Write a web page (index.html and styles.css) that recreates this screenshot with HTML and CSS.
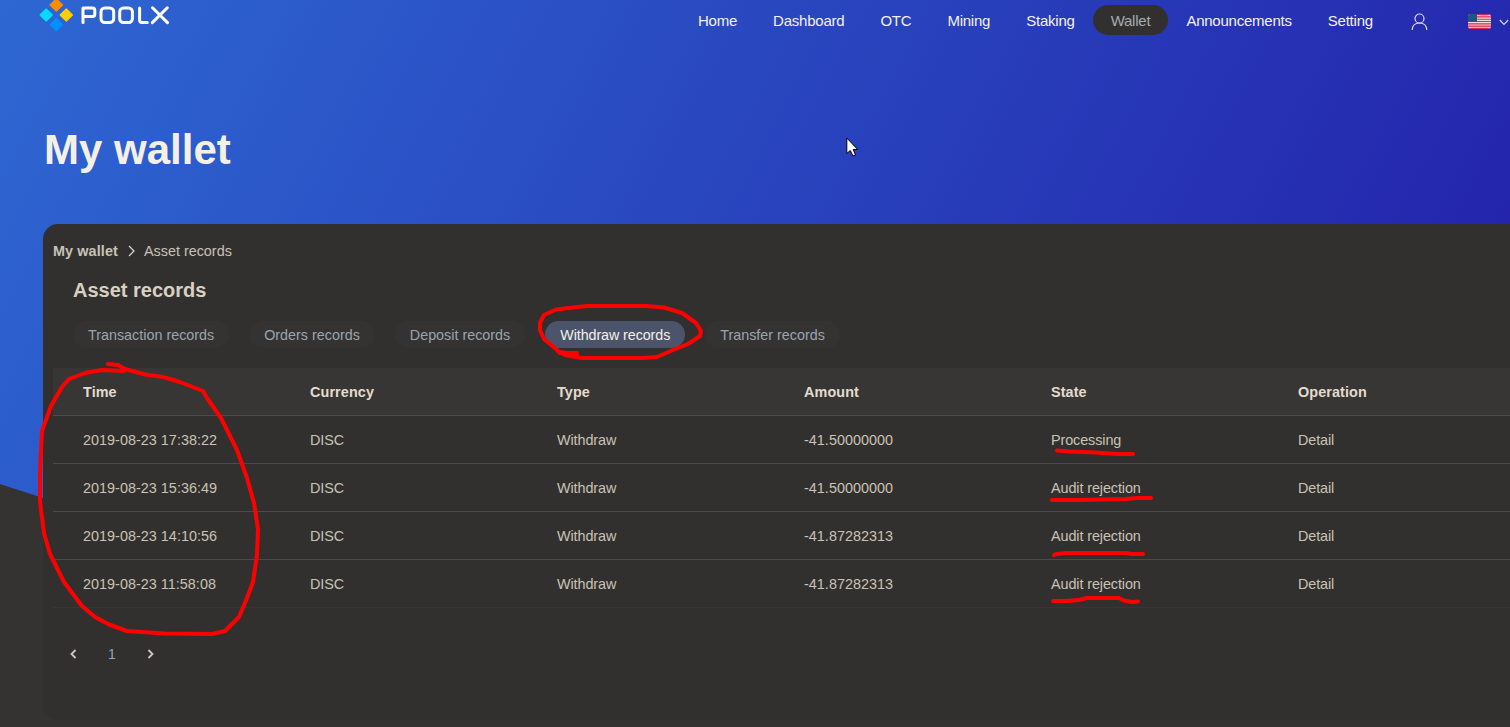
FILE: index.html
```html
<!DOCTYPE html>
<html lang="en">
  <head>
    <meta charset="UTF-8" />
    <meta name="viewport" content="width=device-width, initial-scale=1.0" />
    <title>POOLX - My wallet</title>
    <link rel="stylesheet" href="styles.css">
  </head>

  <body>
    <div class="page">
      <div class="page_bg"></div>
      <header class="header">
        <a class="logo">
          <svg width="132" height="34" viewBox="0 0 132 34">
            <g transform="translate(-39 0)">
              <rect x="-5" y="-5" width="10" height="10" rx="1" fill="#ff8c00" transform="translate(56.3 5) rotate(45)" />
              <rect x="-5" y="-5" width="10" height="10" rx="1" fill="#00dcff" transform="translate(46.2 15) rotate(45)" />
              <rect x="-5" y="-5" width="10" height="10" rx="1" fill="#ffcd00" transform="translate(66.3 15) rotate(45)" />
              <rect x="-5" y="-5" width="10" height="10" rx="1" fill="#0090ff" transform="translate(56.3 24.6) rotate(45)" />
              <!-- wordmark strokes -->
              <g class="logo_mark">
                <path d="M83 22.500V8h9.500q2.300 0 2.300 2.300v3.900q0 2.300-2.300 2.300H83" />
                <rect x="101" y="8" width="12.700" height="14.500" rx="3.800" />
                <rect x="119.700" y="8" width="12.700" height="14.500" rx="3.800" />
                <path d="M139.600 8v12q0 2.500 2.500 2.500h5.200" />
                <path d="M152.500 7.800l15 14.800M167.300 7.800l-15 14.800" />
              </g>
            </g>
          </svg>
        </a>
        <nav class="nav">
          <a class="nav_item">Home</a>
          <a class="nav_item">Dashboard</a>
          <a class="nav_item">OTC</a>
          <a class="nav_item">Mining</a>
          <a class="nav_item">Staking</a>
          <a class="nav_item active">Wallet</a>
          <a class="nav_item">Announcements</a>
          <a class="nav_item">Setting</a>
        </nav>
        <a class="user">
          <svg width="17" height="18" viewBox="0 0 17 18">
            <circle cx="8.500" cy="5.500" r="4.500" />
            <path d="M1.200 17c.2-4.600 3-7 7.300-7s7.100 2.400 7.300 7" />
          </svg>
        </a>
        <a class="lang">
          <svg class="flag" width="23" height="15" viewBox="0 0 23 15">
            <rect width="23" height="15" fill="#f3dfe5" />
            <path d="M0 .6h23M0 2.900h23M0 5.200h23M0 7.500h23M0 9.800h23M0 12.100h23M0 14.400h23" stroke="#d8274a" stroke-width="1.150" />
            <rect width="9" height="7.800" fill="#1d5788" />
          </svg>
          <svg class="arrow" width="10" height="7" viewBox="0 0 10 7">
            <path d="M.8 1L5 5.300 9.200 1" />
          </svg>
        </a>
      </header>

      <h1 class="title">My wallet</h1>

      <main class="panel">
        <div class="crumb">
          <b>My wallet</b>
          <svg width="7" height="12" viewBox="0 0 7 12"><path d="M1 1L6 6 1 11" /></svg>
          <span>Asset records</span>
        </div>
        <h2 class="sub_title">Asset records</h2>
        <div class="tabs">
          <a class="tab">Transaction records</a>
          <a class="tab">Orders records</a>
          <a class="tab">Deposit records</a>
          <a class="tab active">Withdraw records</a>
          <a class="tab">Transfer records</a>
        </div>
        <table class="records">
          <thead>
            <tr>
              <th class="time">Time</th>
              <th>Currency</th>
              <th>Type</th>
              <th>Amount</th>
              <th>State</th>
              <th>Operation</th>
            </tr>
          </thead>
          <tbody>
            <tr>
              <td class="num">2019-08-23 17:38:22</td>
              <td>DISC</td>
              <td>Withdraw</td>
              <td class="num">-41.50000000</td>
              <td>Processing</td>
              <td>Detail</td>
            </tr>
            <tr>
              <td class="num">2019-08-23 15:36:49</td>
              <td>DISC</td>
              <td>Withdraw</td>
              <td class="num">-41.50000000</td>
              <td>Audit rejection</td>
              <td>Detail</td>
            </tr>
            <tr>
              <td class="num">2019-08-23 14:10:56</td>
              <td>DISC</td>
              <td>Withdraw</td>
              <td class="num">-41.87282313</td>
              <td>Audit rejection</td>
              <td>Detail</td>
            </tr>
            <tr>
              <td class="num">2019-08-23 11:58:08</td>
              <td>DISC</td>
              <td>Withdraw</td>
              <td class="num">-41.87282313</td>
              <td>Audit rejection</td>
              <td>Detail</td>
            </tr>
          </tbody>
        </table>
        <div class="pager">
          <svg width="7" height="10" viewBox="0 0 7 10"><path d="M5.500 1L1.500 5l4 4" /></svg>
          <span>1</span>
          <svg width="7" height="10" viewBox="0 0 7 10"><path d="M1.500 1l4 4-4 4" /></svg>
        </div>
      </main>

      <!-- hand drawn marks -->
      <svg class="marks" width="1510" height="727" viewBox="0 0 1510 727">
        <path d="M108 364L118 365 125 369 145 374.500 163 377 180 382 203 391 207 398 221 418 237 450 247 478 254 503 258 529 257 555 253 582 247 598 239 617 225 631 212 634 165 633.500 127 631 109 624.500 95 617 82 606 64 582 50 554 44 533 40 502 40 472 42 431 51 406 62 387 69 379 85 373 102 370 124 371" />
        <path d="M577 353L560 353 556 349 544 339 540 330 540 323 544 315 556 309.500 587 306 646 306 664 307.500 682 313 696 323 701 331 700 336 688 344 673 350 657 357 643 358 582 358 565 355 559 352 577 354" />
        <path d="M1057 450.500L1070 451.500 1096 452.500 1117 454 1133 454" />
        <path d="M1052 500H1078L1125 499 1138 498H1151" />
        <path d="M1054 555L1057 554 1066 553H1126L1132 554H1143" />
        <path d="M1053 601H1066L1079 600 1087 598H1119L1124 600.500 1132 602 1138 601.500" />
      </svg>
      <svg class="cursor" width="13" height="20" viewBox="0 0 13 20">
        <path d="M.8 1v15.500l3.500-3 2.700 5.500 2.500-1-2.300-5.500h4.500z" />
      </svg>
    </div>
  </body>
</html>
```
FILE: styles.css
```css
body {
  margin: 0;
  font-family: "Liberation Sans", Arial, sans-serif;
  font-size: 14px;
  color: #c9c2b6;
  background-color: #343331;
}

.page {
  position: relative;
  height: 727px;
  overflow: hidden;
}

.page_bg {
  position: absolute;
  z-index: -1;
  left: 0;
  top: 0;
  width: 100%;
  height: 640px;
  background: linear-gradient(118deg, #2e67d2 0%, #2425ac 88%);
  clip-path: polygon(0 0, 100% 0, 100% 100%, 480px 100%, 0 484px);
}

.header {
  display: flex;
  height: 34px;
  padding-left: 39px;
}

.logo_mark {
  fill: none;
  stroke: #fff;
  stroke-width: 3;
  stroke-linecap: round;
  stroke-linejoin: round;
}

.nav {
  display: flex;
  margin-left: 509px;
  padding-top: 5px;
}

.nav_item {
  height: 30px;
  padding: 0 18px;
  line-height: 31px;
  font-size: 15px;
  letter-spacing: -0.23px;
  color: #f4f0ea;
  border-radius: 15px;
}

.nav_item.active {
  color: #a6abb0;
  background-color: #32302e;
}

.user {
  margin: 13px 0 0 20px;
}

.user svg,
.arrow,
.crumb svg {
  fill: none;
  stroke: #ded9dc;
  stroke-width: 1.2;
}

.lang {
  display: flex;
  align-items: flex-start;
  margin: 14px 0 0 40px;
}

.flag {
  border-radius: 3px;
}

.arrow {
  margin: 5px 0 0 8px;
}

.title {
  margin: 92px 0 0 44px;
  line-height: 48px;
  font-size: 42px;
  color: #f5f0e5;
}

/* runs past the right edge of the window */
.panel {
  box-sizing: border-box;
  height: 496px;
  margin: 50px -20px 0 43px;
  padding: 17px 0 0 10px;
  background-color: #32302e;
  border-radius: 15px;
}

.crumb {
  display: flex;
  align-items: center;
  height: 20px;
  font-size: 14.4px;
}

.crumb b {
  letter-spacing: 0.1px;
}

.crumb svg {
  margin: 0 9px 0 10px;
}

.sub_title {
  margin: 17px 0 0 20px;
  line-height: 24px;
  font-size: 20px;
  color: #d8d0c2;
}

.tabs {
  display: flex;
  gap: 20px;
  margin: 19px 0 0 20px;
}

.tab {
  height: 27px;
  padding: 0 15px;
  line-height: 28px;
  font-size: 14.3px;
  letter-spacing: 0.02px;
  color: #9ba5ae;
  background-color: #343332;
  border-radius: 14px;
}

.tab.active {
  letter-spacing: -0.08px;
  color: #f4f0ea;
  background-color: #4b546b;
}

.records {
  width: 1462px;
  margin-top: 20px;
  table-layout: fixed;
  border-collapse: separate;
  border-spacing: 0;
}

.records th,
.records td {
  box-sizing: border-box;
  width: 247px;
  height: 48px;
  padding: 0 0 0 30px;
  text-align: left;
  font-size: 14.4px;
  letter-spacing: -0.1px;
  border-bottom: 1px solid #4b4b4f;
}

.records th {
  letter-spacing: 0.1px;
  color: #e3dccf;
  background-color: #383634;
}

.records .time {
  width: 227px;
}

.records .num {
  letter-spacing: 0.02px;
}

.records tr:last-child td {
  border-bottom-color: #383635;
}

.records thead tr:last-child th {
  border-bottom-color: #4b4b4f;
}

.pager {
  display: flex;
  align-items: center;
  height: 20px;
  margin: 36px 0 0 17px;
}

.pager span {
  margin: 0 31px;
  color: #8ba5bd;
}

.pager svg {
  fill: none;
  stroke: #d0c9bd;
  stroke-width: 1.8;
}

.marks {
  position: absolute;
  left: 0;
  top: 0;
  fill: none;
  stroke: #f00;
  stroke-width: 4;
  stroke-linecap: round;
  stroke-linejoin: round;
}

.cursor {
  position: absolute;
  left: 846px;
  top: 137px;
  fill: #fff;
  stroke: #000;
  stroke-width: 1;
}
```
